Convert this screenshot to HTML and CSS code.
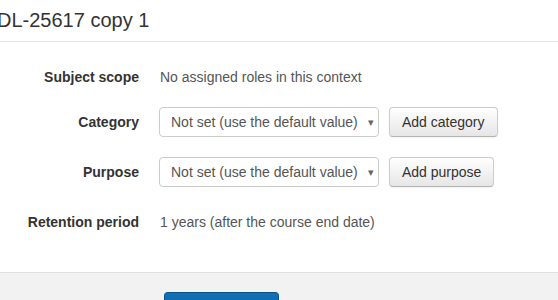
FILE: index.html
```html
<!DOCTYPE html>
<html>
<head>
  <title>Data registry</title>
  <meta charset="UTF-8">
  <link rel="stylesheet" href="styles.css">
</head>
<body>
  <div class="modal">
    <div class="modal-header">
      <h5 class="modal-title">DL-25617 copy 1</h5>
    </div>

    <div class="modal-body">
      <div class="fitem fitem-first">
        <div class="fitem-label">Subject scope</div>
        <div class="fitem-static">No assigned roles in this context</div>
      </div>

      <div class="fitem">
        <label class="fitem-label" for="category">Category</label>
        <div class="fitem-control">
          <div class="select-wrap">
            <select id="category" class="custom-select">
              <option>Not set (use the default value)</option>
            </select>
          </div>
          <button class="btn btn-default">Add category</button>
        </div>
      </div>

      <div class="fitem">
        <label class="fitem-label" for="purpose">Purpose</label>
        <div class="fitem-control">
          <div class="select-wrap">
            <select id="purpose" class="custom-select">
              <option>Not set (use the default value)</option>
            </select>
          </div>
          <button class="btn btn-default">Add purpose</button>
        </div>
      </div>

      <div class="fitem">
        <div class="fitem-label">Retention period</div>
        <div class="fitem-static">1 years (after the course end date)</div>
      </div>
    </div>

    <div class="modal-footer">
      <button class="btn btn-primary">Save changes</button>
    </div>
  </div>
</body>
</html>
```

FILE: styles.css
```css
* {
  margin: 0;
  padding: 0;
  box-sizing: border-box;
}

body {
  width: 558px;
  height: 300px;
  font-family: "Liberation Sans", Arial, sans-serif;
  font-size: 14px;
  line-height: 20px;
  color: #333;
  background: #fff;
  overflow: hidden;
}

.modal {
  display: flex;
  flex-direction: column;
  height: 300px;
}

.modal-header {
  flex-shrink: 0;
  height: 42px;
  display: flex;
  align-items: center;
  border-bottom: 1px solid #e3e3e3;
  padding-bottom: 1px;
}

.modal-title {
  font-size: 20px;
  font-weight: 400;
  line-height: 23px;
  color: #333;
  margin-left: -3px;
}

.modal-body {
  flex-shrink: 0;
  padding: 20px 0 35px;
  display: flex;
  flex-direction: column;
  gap: 20px;
}

.fitem {
  display: grid;
  grid-template-columns: 139px 1fr;
  column-gap: 20px;
  align-items: center;
  min-height: 30px;
}

.fitem-first {
  margin-bottom: -5px;
}

.fitem-label {
  text-align: right;
  font-weight: 700;
  color: #333;
}

.fitem-static {
  padding-left: 1px;
  color: #555;
}

.fitem-control {
  display: flex;
  align-items: center;
  gap: 10px;
}

.select-wrap {
  position: relative;
}

.select-wrap::after {
  content: "\25BE";
  position: absolute;
  right: 5px;
  top: 5px;
  font-size: 11px;
  color: #666;
  pointer-events: none;
}

.custom-select {
  appearance: none;
  -webkit-appearance: none;
  width: 220px;
  height: 30px;
  padding: 0 14px 0 11px;
  font-family: inherit;
  font-size: 14px;
  color: #555;
  background: #fff;
  border: 1px solid #ccc;
  border-radius: 4px;
  outline: none;
}

.btn {
  font-family: inherit;
  font-size: 14px;
  line-height: 20px;
  cursor: pointer;
  border-radius: 4px;
}

.btn-default {
  height: 30px;
  padding: 0 12px;
  color: #333;
  background: linear-gradient(to bottom, #fff 0%, #e6e6e6 100%);
  border: 1px solid #ccc;
  border-bottom-color: #b3b3b3;
  box-shadow: inset 0 1px 0 rgba(255, 255, 255, 0.2), 0 1px 2px rgba(0, 0, 0, 0.05);
}

.modal-footer {
  flex: 1 0 auto;
  background: #f2f2f2;
  border-top: 1px solid #e0e0e0;
  padding: 19px 0 0 164px;
}

.btn-primary {
  width: 115px;
  height: 36px;
  color: #fff;
  background: linear-gradient(to bottom, #1070b8 0%, #0b5fa0 100%);
  border: 1px solid #0a5590;
  border-top-color: #0b5288;
}
```
